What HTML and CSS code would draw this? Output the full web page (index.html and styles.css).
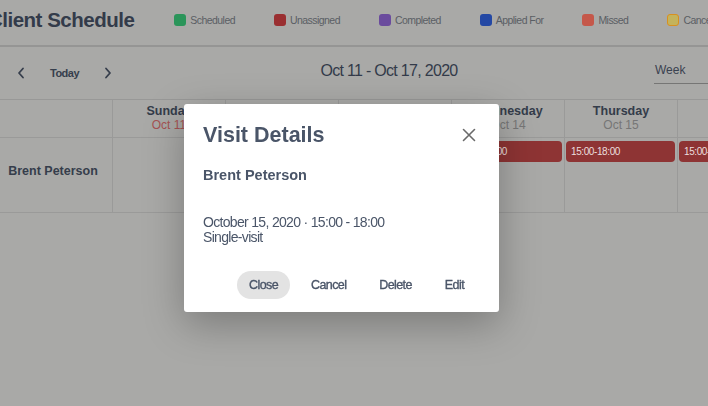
FILE: index.html
```html
<!DOCTYPE html>
<html>
<head>
<meta charset="utf-8">
<link rel="stylesheet" href="styles.css">
</head>
<body>
<div class="app">
  <header class="header">
    <h1 class="title">Client Schedule</h1>
    <ul class="legend">
      <li class="legend-item"><span class="sw sw-scheduled"></span>Scheduled</li>
      <li class="legend-item"><span class="sw sw-unassigned"></span>Unassigned</li>
      <li class="legend-item"><span class="sw sw-completed"></span>Completed</li>
      <li class="legend-item"><span class="sw sw-applied"></span>Applied For</li>
      <li class="legend-item"><span class="sw sw-missed"></span>Missed</li>
      <li class="legend-item"><span class="sw sw-cancelled"></span>Cancelled</li>
    </ul>
  </header>

  <div class="toolbar">
    <div class="nav">
      <span class="chev"><svg width="8" height="12" viewBox="0 0 8 12"><polyline points="6,1.5 2,6 6,10.5" fill="none" stroke="#363e4c" stroke-width="1.8" stroke-linecap="round" stroke-linejoin="round"/></svg></span>
      <span class="today">Today</span>
      <span class="chev"><svg width="8" height="12" viewBox="0 0 8 12"><polyline points="2,1.5 6,6 2,10.5" fill="none" stroke="#363e4c" stroke-width="1.8" stroke-linecap="round" stroke-linejoin="round"/></svg></span>
    </div>
    <div class="range">Oct 11 - Oct 17, 2020</div>
    <div class="view"><span class="view-label">Week</span></div>
  </div>

  <div class="grid">
    <div class="cell head corner"></div>
    <div class="cell head"><div class="dname">Sunday</div><div class="ddate today-date">Oct 11</div></div>
    <div class="cell head"><div class="dname">Monday</div><div class="ddate">Oct 12</div></div>
    <div class="cell head"><div class="dname">Tuesday</div><div class="ddate">Oct 13</div></div>
    <div class="cell head"><div class="dname">Wednesday</div><div class="ddate">Oct 14</div></div>
    <div class="cell head"><div class="dname">Thursday</div><div class="ddate">Oct 15</div></div>
    <div class="cell head"><div class="dname">Friday</div><div class="ddate">Oct 16</div></div>
    <div class="cell head"><div class="dname">Saturday</div><div class="ddate">Oct 17</div></div>

    <div class="cell body client">Brent Peterson</div>
    <div class="cell body"></div>
    <div class="cell body"></div>
    <div class="cell body"></div>
    <div class="cell body"><div class="event">15:00-18:00</div></div>
    <div class="cell body"><div class="event">15:00-18:00</div></div>
    <div class="cell body"><div class="event">15:00-18:00</div></div>
    <div class="cell body"></div>
  </div>
</div>

<div class="modal">
  <div class="modal-head">
    <h2 class="modal-title">Visit Details</h2>
    <span class="modal-x"><svg width="14" height="14" viewBox="0 0 14 14"><path d="M1.5 1.5 L12.5 12.5 M12.5 1.5 L1.5 12.5" stroke="#6a6a6a" stroke-width="1.6" stroke-linecap="round"/></svg></span>
  </div>
  <div class="modal-client">Brent Peterson</div>
  <div class="modal-info">
    <div>October 15, 2020 · 15:00 - 18:00</div>
    <div>Single-visit</div>
  </div>
  <div class="modal-actions">
    <span class="btn btn-primary">Close</span>
    <span class="btn">Cancel</span>
    <span class="btn">Delete</span>
    <span class="btn">Edit</span>
  </div>
</div>
</body>
</html>
```

FILE: styles.css
```css
* { box-sizing: border-box; }
html, body {
  margin: 0;
  padding: 0;
  width: 708px;
  height: 406px;
  overflow: hidden;
  background: #a9a9a7;
  font-family: "Liberation Sans", Arial, sans-serif;
  color: #353d4b;
}
.app {
  width: 802px;
  margin-left: -12px;
}
.header {
  height: 47px;
  display: flex;
  align-items: center;
  border-bottom: 2px solid #959594;
  padding-bottom: 6px;
}
.title {
  margin: 0;
  font-size: 20.5px;
  letter-spacing: -0.5px;
  font-weight: bold;
  color: #333b4a;
  white-space: nowrap;
}
.legend {
  list-style: none;
  margin: 0 0 0 40px;
  padding: 0;
  display: flex;
  gap: 39px;
}
.legend-item {
  display: flex;
  align-items: center;
  gap: 4px;
  font-size: 10.5px;
  letter-spacing: -0.55px;
  color: #5a5e64;
  white-space: nowrap;
}
.sw {
  width: 12px;
  height: 12px;
  border-radius: 3px;
  display: inline-block;
}
.sw-scheduled { background: #2b955a; }
.sw-unassigned { background: #9a2f31; }
.sw-completed { background: #6a4b9d; }
.sw-applied { background: #2448a4; }
.sw-missed { background: #c5584a; }
.sw-cancelled { background: #c4b35c; border: 1.5px solid #d9901f; }

.toolbar {
  height: 52px;
  display: flex;
  align-items: center;
}
.nav {
  display: flex;
  align-items: center;
  padding-left: 29px;
  width: 300px;
}
.chev { display: flex; width: 8px; height: 12px; }
.today {
  font-size: 11px;
  letter-spacing: -0.5px;
  font-weight: bold;
  color: #363e4c;
  margin: 0 25px 0 25px;
}
.range {
  flex: 1;
  text-align: center;
  font-size: 16px;
  letter-spacing: -0.7px;
  color: #333b4a;
  margin-top: -5px;
  white-space: nowrap;
}
.view {
  width: 300px;
  padding-left: 164px;
  margin-top: 1px;
}
.view-label {
  display: block;
  font-size: 12px;
  color: #3a4250;
  padding: 0 0 6px 1px;
  border-bottom: 1px solid #767675;
}

.grid {
  display: grid;
  grid-template-columns: 125px repeat(7, 113px);
  border-top: 1px solid #989897;
}
.cell {
  border-right: 1px solid #9a9a99;
  border-bottom: 1px solid #9a9a99;
}
.head {
  height: 38px;
  text-align: center;
  padding-top: 4px;
}
.dname {
  font-size: 12.5px;
  font-weight: bold;
  color: #343c4a;
  line-height: 14px;
}
.ddate {
  font-size: 12px;
  color: #767676;
  line-height: 15px;
}
.ddate.today-date { color: #a55252; }
.body {
  height: 75px;
  padding: 3px 1px 0 1px;
}
.client {
  display: flex;
  align-items: center;
  justify-content: center;
  padding: 0 0 8px 6px;
  font-size: 12.5px;
  font-weight: bold;
  color: #353d4b;
}
.event {
  height: 21px;
  width: 109px;
  background: #8e3434;
  border-radius: 4px;
  color: #ebdede;
  font-size: 10px;
  letter-spacing: -0.4px;
  line-height: 21px;
  padding-left: 5px;
  white-space: nowrap;
}

.modal {
  position: fixed;
  left: 184px;
  top: 104px;
  width: 315px;
  height: 208px;
  background: #fff;
  border-radius: 3px;
  box-shadow: 0 12px 40px rgba(0, 0, 0, 0.28);
  padding: 17px 23px 0 19px;
  color: #4a5568;
}
.modal-head {
  display: flex;
  align-items: center;
  justify-content: space-between;
}
.modal-title {
  margin: 0;
  font-size: 21.5px;
  font-weight: bold;
  color: #4a5568;
  line-height: 28px;
}
.modal-x { display: flex; }
.modal-client {
  margin-top: 17px;
  font-size: 14.5px;
  font-weight: bold;
  color: #4a5568;
  line-height: 18px;
}
.modal-info {
  margin-top: 31px;
  font-size: 14px;
  letter-spacing: -0.68px;
  line-height: 15px;
  color: #4a5568;
  white-space: nowrap;
}
.modal-actions {
  display: flex;
  justify-content: flex-end;
  margin-top: 26px;
  gap: 9px;
}
.btn {
  height: 28px;
  line-height: 28px;
  padding: 0 12px;
  border-radius: 14px;
  font-size: 12.5px;
  letter-spacing: -0.6px;
  color: #4a5568;
  -webkit-text-stroke: 0.35px #4a5568;
  white-space: nowrap;
}
.btn-primary { background: #e3e3e3; }
```
